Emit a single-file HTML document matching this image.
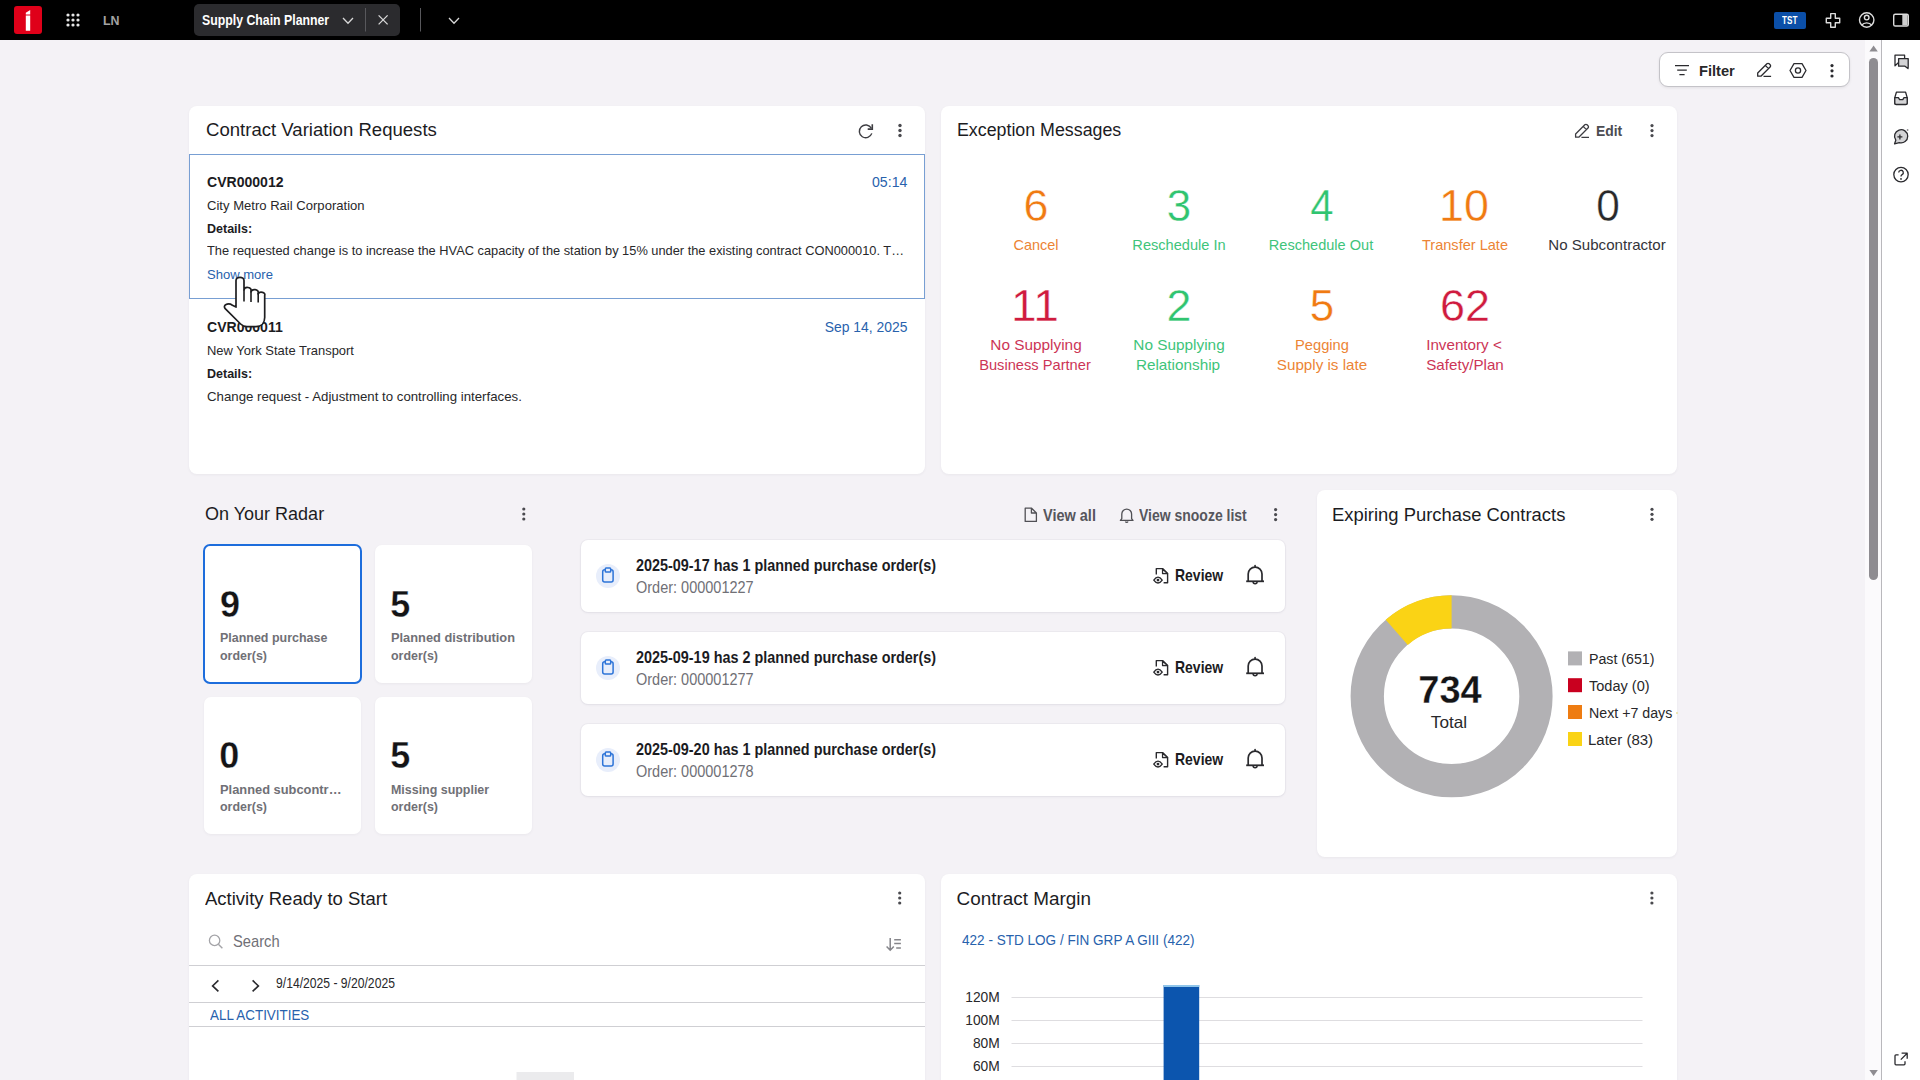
<!DOCTYPE html>
<html><head><meta charset="utf-8"><title>Supply Chain Planner</title>
<style>
html,body{margin:0;padding:0;}
body{width:1920px;height:1080px;overflow:hidden;position:relative;background:#f4f2f6;font-family:"Liberation Sans",sans-serif;}
.a{position:absolute;}
.t{position:absolute;white-space:nowrap;line-height:1;font-family:"Liberation Sans",sans-serif;}
.card{position:absolute;background:#fff;border-radius:8px;box-shadow:0 1px 3px rgba(40,30,60,0.05);}
.tile{position:absolute;background:#fff;border-radius:7px;box-shadow:0 1px 3px rgba(40,30,60,0.05);}
.ord{position:absolute;background:#fff;border-radius:7px;box-shadow:0 0 0 1px rgba(40,30,60,0.03),0 1px 3px rgba(40,30,60,0.06);}
svg{position:absolute;overflow:visible;}
</style></head><body>
<!-- top bar -->
<div class="a" style="left:0;top:0;width:1920px;height:40px;background:#000;"></div>
<div class="a" style="left:14px;top:6px;width:28px;height:28px;background:#df0019;border-radius:3px;"></div>
<svg style="left:14px;top:6px" width="28" height="28"><path d="M11.8 9.4h4.4v15.4h-4.4z M11.8 8.6v-1.9l4.4-2.7v4.6z" fill="#fff"/></svg>
<svg style="left:60px;top:8px" width="26" height="26" viewBox="60 8 26 26"><g fill="#e6e6e6"><circle cx="68" cy="15" r="1.6"/><circle cx="73" cy="15" r="1.6"/><circle cx="78" cy="15" r="1.6"/><circle cx="68" cy="20" r="1.6"/><circle cx="73" cy="20" r="1.6"/><circle cx="78" cy="20" r="1.6"/><circle cx="68" cy="25" r="1.6"/><circle cx="73" cy="25" r="1.6"/><circle cx="78" cy="25" r="1.6"/></g></svg>
<div class="a" style="left:194px;top:4px;width:206px;height:32px;background:#2b2b2e;border-radius:5px;"></div>
<svg style="left:0;top:0" width="1920" height="40"><g fill="none" stroke="#d8d8d8" stroke-width="1.3">
<path d="M343 18l5 5.2 5-5.2"/><path d="M378.6 15.4l9 9M387.6 15.4l-9 9"/><path d="M449 18l5 5.2 5-5.2"/>
</g><path d="M365.5 8v23.5M420.5 8v23.5" stroke="#58585c" stroke-width="1"/></svg>
<div class="a" style="left:1774px;top:12px;width:32px;height:17px;background:#0b4fa8;border-radius:2px;"></div>
<svg style="left:1820px;top:8px" width="100" height="26" viewBox="1820 8 100 26"><g fill="none" stroke="#dcdcdc" stroke-width="1.4" stroke-linejoin="round">
<path d="M1830.7 13.6h4.6v4.6h4.4v4.6h-4.4v4.5h-4.6v-4.5h-4.4v-4.6h4.4z"/>
<circle cx="1866.7" cy="20" r="7.2"/><circle cx="1866.7" cy="17.6" r="2.3"/><path d="M1861.6 25.2c1.4-1.7 3-2.3 5.1-2.3s3.7.6 5.1 2.3"/>
<rect x="1893.7" y="14.2" width="14.6" height="11.8" rx="1.6"/></g>
<rect x="1902.3" y="14.9" width="5.3" height="10.4" fill="#cfcfcf"/></svg>

<!-- right side strip -->
<div class="a" style="left:1865px;top:40px;width:16px;height:1040px;background:#fbfafc;"></div>
<div class="a" style="left:1881px;top:40px;width:1px;height:1040px;background:#b9b8bc;"></div>
<div class="a" style="left:1882px;top:40px;width:38px;height:1040px;background:#fff;"></div>
<div class="a" style="left:1869px;top:58px;width:9px;height:522px;background:#8e8c91;border-radius:4.5px;"></div>
<svg style="left:1860px;top:40px" width="60" height="1040" viewBox="1860 40 60 1040">
<path d="M1873.6 45.6l4.2 6h-8.4z" fill="#8e8c91"/><path d="M1873.6 1076l4.2-6h-8.4z" fill="#8e8c91"/>
<g fill="none" stroke="#2a2a2e" stroke-width="1.3" stroke-linejoin="round">
<path d="M1895 55.2h9.6v7.4h-6l-3.6 3.2z"/><path d="M1898.6 58.6h9.6v7.6l-0.2 2.4-3-2.4h-6.4z" fill="#d4d4d6"/>
<path d="M1894.8 97.6l1.6-5.4h9.2l1.6 5.4v5.6a1.4 1.4 0 0 1-1.4 1.4h-9.6a1.4 1.4 0 0 1-1.4-1.4z"/><path d="M1894.8 97.6h3.6l1.2 2h3.2l1.2-2h3.2v5.4a1.4 1.4 0 0 1-1.4 1.4h-9.6a1.4 1.4 0 0 1-1.4-1.4z" fill="#d4d4d6"/>
<path d="M1894.6 143.8l1.2-3.6a6.6 6.6 0 1 1 3.4 2.4z" fill="#d4d4d6"/><path d="M1899.9 134.4v5M1897.4 136.9h5"/>
<circle cx="1901" cy="174.6" r="7.2"/><path d="M1898.7 172.6a2.3 2.3 0 1 1 3.4 2c-.9.5-1.1 1-1.1 1.9"/>
<path d="M1901.6 1053.2h5.6v5.6M1907.2 1053.2l-6.4 6.4M1898.6 1054.8h-2.6a1 1 0 0 0-1 1v8a1 1 0 0 0 1 1h8a1 1 0 0 0 1-1v-2.6"/>
</g><circle cx="1901" cy="178.9" r="0.9" fill="#2a2a2e"/><circle cx="1907.6" cy="130" r="0.9" fill="#8e8c91"/></svg>

<!-- filter pill -->
<div class="a" style="left:1659px;top:52px;width:189px;height:33.4px;background:#fff;border:1px solid #c4c3c8;border-radius:9px;box-shadow:0 1px 3px rgba(0,0,0,0.08);"></div>
<svg style="left:1660px;top:52px" width="190" height="36" viewBox="1660 52 190 36"><g fill="none" stroke="#2a2a2e" stroke-width="1.3" stroke-linejoin="round">
<path d="M1675 65.6h14M1677.2 70.2h9.6M1679.4 74.6h5.2"/>
<path d="M1757.7 76.2v-3.2l9.2-9.2a1.6 1.6 0 0 1 2.3 0l.9.9a1.6 1.6 0 0 1 0 2.3l-9.2 9.2z M1765.3 65.4l3.2 3.2 M1763.5 76.3h7.6"/>
<path d="M1794 63.6h8l4 6.9-4 6.9h-8l-4-6.9z"/><circle cx="1798" cy="70.5" r="2.6"/></g>
<g fill="#2a2a2e"><circle cx="1832" cy="65.6" r="1.6"/><circle cx="1832" cy="70.8" r="1.6"/><circle cx="1832" cy="76" r="1.6"/></g></svg>

<!-- card 1: contract variation requests -->
<div class="card" style="left:189px;top:106px;width:736px;height:368px;"></div>
<div class="a" style="left:189px;top:154px;width:734px;height:143px;border:1px solid #789fd3;"></div>
<svg style="left:850px;top:115px" width="70" height="30" viewBox="850 115 70 30"><path d="M871.3 128.2a6.4 6.4 0 1 0 .5 5.2" fill="none" stroke="#3d3d42" stroke-width="1.4"/><path d="M872.3 124.2v4.9h-4.6" fill="none" stroke="#3d3d42" stroke-width="1.6" stroke-linejoin="miter"/>
<g fill="#4a4a4f"><circle cx="900" cy="125.5" r="1.7"/><circle cx="900" cy="130.5" r="1.7"/><circle cx="900" cy="135.5" r="1.7"/></g></svg>

<!-- card 2: exception messages -->
<div class="card" style="left:941px;top:106px;width:736px;height:368px;"></div>
<svg style="left:1570px;top:115px" width="100" height="30" viewBox="1570 115 100 30"><g fill="none" stroke="#3d3d42" stroke-width="1.3" stroke-linejoin="round">
<path d="M1575.6 137.2v-3.2l9.2-9.2a1.6 1.6 0 0 1 2.3 0l.9.9a1.6 1.6 0 0 1 0 2.3l-9.2 9.2z M1583.2 126.4l3.2 3.2 M1581.4 137.3h7.6"/></g>
<g fill="#4a4a4f"><circle cx="1652" cy="125.6" r="1.6"/><circle cx="1652" cy="130.6" r="1.6"/><circle cx="1652" cy="135.6" r="1.6"/></g></svg>

<!-- radar -->
<svg style="left:500px;top:500px" width="40" height="30" viewBox="500 500 40 30"><g fill="#4a4a4f"><circle cx="523.8" cy="509" r="1.6"/><circle cx="523.8" cy="514" r="1.6"/><circle cx="523.8" cy="519" r="1.6"/></g></svg>
<div class="tile" style="left:203px;top:544px;width:155px;height:136px;border:2px solid #1d6ddc;box-shadow:none;"></div>
<div class="tile" style="left:374.6px;top:545px;width:157.4px;height:138px;"></div>
<div class="tile" style="left:204px;top:697px;width:157.4px;height:137.4px;"></div>
<div class="tile" style="left:374.6px;top:697px;width:157.4px;height:137.4px;"></div>
<svg style="left:1015px;top:500px" width="280" height="30" viewBox="1015 500 280 30"><g fill="none" stroke="#505055" stroke-width="1.3" stroke-linejoin="round">
<path d="M1025.2 508.2h6.4l4.8 4.8v8.4h-11.2z M1031.4 508.2v4.8h5"/>
<path d="M1121.8 518.6v-4.6a4.9 4.9 0 0 1 9.8 0v4.6l1.4 1.8h-12.6z M1125.4 521.4a1.4 1.4 0 0 0 2.6 0"/></g>
<g fill="#4a4a4f"><circle cx="1275.6" cy="509.6" r="1.6"/><circle cx="1275.6" cy="514.6" r="1.6"/><circle cx="1275.6" cy="519.6" r="1.6"/></g></svg>
<!--ORDERS-->
<div class="ord" style="left:581px;top:540px;width:704px;height:72px;"></div>
<div class="ord" style="left:581px;top:632px;width:704px;height:72px;"></div>
<div class="ord" style="left:581px;top:724px;width:704px;height:72px;"></div>
<svg style="left:590px;top:550px" width="690" height="240" viewBox="590 550 690 240">
<defs><g id="clip"><circle cx="0.2" cy="0.5" r="12" fill="#e8eefb"/><rect x="-5.1" y="-5.6" width="10.4" height="12.2" rx="2" fill="none" stroke="#2d74d8" stroke-width="1.5"/><rect x="-2.5" y="-7.3" width="5.4" height="3.9" rx="0.8" fill="#e8eefb" stroke="#2d74d8" stroke-width="1.5"/></g>
<g id="rev"><path d="M2.8 6V0H9l5.1 5v9.1h-4" fill="none" stroke="#2a2a2e" stroke-width="1.4" stroke-linejoin="round"/><path d="M9 0v5h5.1z" fill="#2a2a2e" fill-opacity="0.15" stroke="#2a2a2e" stroke-width="1.2" stroke-linejoin="round"/><path d="M0.3 11.5Q4.5 5.6 8.7 11.5Q4.5 17.4 0.3 11.5z" fill="#fff" stroke="#2a2a2e" stroke-width="1.4" stroke-linejoin="round"/><circle cx="4.5" cy="11.5" r="1.4" fill="#2a2a2e"/></g>
<g id="bell"><path d="M2.4 15.9V8.6a6.9 6.9 0 0 1 13.8 0v7.3" fill="none" stroke="#2a2a2e" stroke-width="1.7"/><path d="M0.4 15.9h17.8" stroke="#2a2a2e" stroke-width="1.8"/><path d="M7.3 16.4a2 2 0 0 0 4 0" fill="none" stroke="#2a2a2e" stroke-width="1.5"/><path d="M9.3 0.2v1.6" stroke="#2a2a2e" stroke-width="1.6" stroke-linecap="round"/></g></defs>
<use href="#clip" x="607.8" y="575.4"/><use href="#clip" x="607.8" y="667.4"/><use href="#clip" x="607.8" y="759.4"/>
<use href="#rev" x="1153.5" y="568.6"/><use href="#rev" x="1153.5" y="660.6"/><use href="#rev" x="1153.5" y="752.6"/>
<use href="#bell" x="1245.8" y="565.4"/><use href="#bell" x="1245.8" y="657.4"/><use href="#bell" x="1245.8" y="749.4"/>
</svg>

<!-- expiring purchase contracts -->
<div class="card" style="left:1317px;top:490px;width:360px;height:367px;"></div>
<svg style="left:1317px;top:490px" width="360" height="370" viewBox="1317 490 360 370">
<g fill="#4a4a4f"><circle cx="1652" cy="509.3" r="1.6"/><circle cx="1652" cy="514.3" r="1.6"/><circle cx="1652" cy="519.3" r="1.6"/></g>
<circle cx="1451.6" cy="696.3" r="84.35" fill="none" stroke="#b2b1b4" stroke-width="33.3"/>
<path d="M1451.6 595.3A101 101 0 0 0 1385.7 619.8L1407.8 645A67.7 67.7 0 0 1 1451.6 628.6z" fill="#fad315"/>
<rect x="1568" y="651.4" width="14" height="14" fill="#b2b1b4"/><rect x="1568" y="678.2" width="14" height="14" fill="#c9001f"/><rect x="1568" y="705" width="14" height="14" fill="#ee7c12"/><rect x="1568" y="732" width="14" height="14" fill="#fad315"/>
<circle cx="1677" cy="713" r="1" fill="#e8e0a0"/>
</svg>

<!-- activity ready to start -->
<div class="card" style="left:189px;top:874px;width:736px;height:220px;"></div>
<svg style="left:189px;top:874px" width="736" height="206" viewBox="189 874 736 206">
<g fill="#4a4a4f"><circle cx="899.7" cy="893" r="1.6"/><circle cx="899.7" cy="898" r="1.6"/><circle cx="899.7" cy="903" r="1.6"/></g>
<circle cx="214.6" cy="940.4" r="5.2" fill="none" stroke="#a4a4a8" stroke-width="1.3"/><path d="M218.4 944.2l4 4" stroke="#a4a4a8" stroke-width="1.4"/>
<path d="M890.2 938v12M886.6 946.4l3.6 3.8 3.6-3.8M894.2 939.8h6.7M894.2 943.6h6.7M896.2 947.9h4.7" fill="none" stroke="#86868b" stroke-width="1.5"/>
<path d="M189 965.5h736M189 1002.5h736M189 1026.5h736" stroke="#cfcfd3" stroke-width="1"/>
<path d="M218.4 980.4l-5.8 5.5 5.8 5.5M252.6 980.4l5.8 5.5-5.8 5.5" fill="none" stroke="#2a2a2e" stroke-width="1.6"/>
<rect x="516.5" y="1072" width="57.5" height="10" fill="#ebebed"/>
</svg>

<!-- contract margin -->
<div class="card" style="left:941px;top:874px;width:736px;height:220px;"></div>
<svg style="left:941px;top:874px" width="736" height="206" viewBox="941 874 736 206">
<g fill="#4a4a4f"><circle cx="1651.9" cy="893" r="1.6"/><circle cx="1651.9" cy="898" r="1.6"/><circle cx="1651.9" cy="903" r="1.6"/></g>
<path d="M1011.5 997.5h631M1011.5 1020.5h631M1011.5 1043.5h631M1011.5 1066.5h631" stroke="#dedde0" stroke-width="1"/>
<rect x="1163.6" y="985" width="35.6" height="100" fill="#0c55ae"/><rect x="1163.6" y="985" width="35.6" height="2" fill="#8fc5ea"/>
</svg>

<div class="t" id="t0" style="top:13.76px;font-size:13.08px;color:#a3a3a3;font-weight:700;left:102.50px;transform:scaleX(0.9500);transform-origin:left top;">LN</div>
<div class="t" id="t1" style="top:13.16px;font-size:14.10px;color:#ffffff;font-weight:700;left:202.26px;transform:scaleX(0.8728);transform-origin:left top;">Supply Chain Planner</div>
<div class="t" id="t2" style="top:16.46px;font-size:10.17px;color:#ffffff;font-weight:700;left:1782.00px;transform:scaleX(0.8000);transform-origin:left top;">TST</div>
<div class="t" id="t3" style="top:63.79px;font-size:14.53px;color:#28282a;font-weight:700;left:1698.98px;transform:scaleX(1.0086);transform-origin:left top;">Filter</div>
<div class="t" id="t4" style="top:121.12px;font-size:18.90px;color:#1c1c1f;left:205.50px;transform:scaleX(0.9829);transform-origin:left top;">Contract Variation Requests</div>
<div class="t" id="t5" style="top:174.79px;font-size:14.53px;color:#1c1c1f;font-weight:700;left:206.50px;transform:scaleX(0.9679);transform-origin:left top;">CVR000012</div>
<div class="t" id="t6" style="top:198.52px;font-size:13.37px;color:#28282a;left:206.50px;transform:scaleX(0.9781);transform-origin:left top;">City Metro Rail Corporation</div>
<div class="t" id="t7" style="top:221.67px;font-size:13.37px;color:#1c1c1f;font-weight:700;left:206.50px;transform:scaleX(0.9362);transform-origin:left top;">Details:</div>
<div class="t" id="t8" style="top:244.47px;font-size:13.37px;color:#28282a;left:206.50px;transform:scaleX(0.9594);transform-origin:left top;">The requested change is to increase the HVAC capacity of the station by 15% under the existing contract CON000010. T…</div>
<div class="t" id="t9" style="top:267.52px;font-size:13.37px;color:#2862ad;left:206.50px;transform:scaleX(0.9761);transform-origin:left top;">Show more</div>
<div class="t" id="t10" style="top:174.69px;font-size:14.53px;color:#2862ad;right:1012.48px;transform:scaleX(0.9722);transform-origin:right top;">05:14</div>
<div class="t" id="t11" style="top:319.79px;font-size:14.53px;color:#1c1c1f;font-weight:700;left:206.50px;transform:scaleX(0.9679);transform-origin:left top;">CVR000011</div>
<div class="t" id="t12" style="top:344.07px;font-size:13.37px;color:#28282a;left:206.50px;transform:scaleX(0.9702);transform-origin:left top;">New York State Transport</div>
<div class="t" id="t13" style="top:367.07px;font-size:13.37px;color:#1c1c1f;font-weight:700;left:206.50px;transform:scaleX(0.9362);transform-origin:left top;">Details:</div>
<div class="t" id="t14" style="top:390.07px;font-size:13.37px;color:#28282a;left:206.50px;transform:scaleX(0.9905);transform-origin:left top;">Change request - Adjustment to controlling interfaces.</div>
<div class="t" id="t15" style="top:319.79px;font-size:14.53px;color:#2862ad;right:1012.26px;transform:scaleX(0.9570);transform-origin:right top;">Sep 14, 2025</div>
<div class="t" id="t16" style="top:120.92px;font-size:18.90px;color:#1c1c1f;left:956.82px;transform:scaleX(0.9422);transform-origin:left top;">Exception Messages</div>
<div class="t" id="t17" style="top:124.19px;font-size:14.53px;color:#4c4c52;font-weight:700;left:1595.52px;transform:scaleX(0.9556);transform-origin:left top;">Edit</div>
<div class="t" id="t18" style="top:183.64px;font-size:44.00px;color:#f07a12;-webkit-text-stroke:0.40px #fff;left:1036.00px;transform:translateX(-50%) scaleX(1.0200);transform-origin:center top;">6</div>
<div class="t" id="t19" style="top:237.04px;font-size:15.55px;color:#ec8435;left:1036.00px;transform:translateX(-50%) scaleX(0.9319);transform-origin:center top;">Cancel</div>
<div class="t" id="t20" style="top:183.64px;font-size:44.00px;color:#30c470;-webkit-text-stroke:0.40px #fff;left:1179.00px;transform:translateX(-50%) scaleX(1.0000);transform-origin:center top;">3</div>
<div class="t" id="t21" style="top:237.04px;font-size:15.55px;color:#3ec47a;left:1179.00px;transform:translateX(-50%) scaleX(0.9388);transform-origin:center top;">Reschedule In</div>
<div class="t" id="t22" style="top:183.64px;font-size:44.00px;color:#30c470;-webkit-text-stroke:0.40px #fff;left:1322.35px;transform:translateX(-50%) scaleX(0.9545);transform-origin:center top;">4</div>
<div class="t" id="t23" style="top:237.04px;font-size:15.55px;color:#3ec47a;left:1321.30px;transform:translateX(-50%) scaleX(0.9369);transform-origin:center top;">Reschedule Out</div>
<div class="t" id="t24" style="top:183.64px;font-size:44.00px;color:#f07a12;-webkit-text-stroke:0.40px #fff;left:1464.30px;transform:translateX(-50%) scaleX(1.0209);transform-origin:center top;">10</div>
<div class="t" id="t25" style="top:237.04px;font-size:15.55px;color:#ec8435;left:1465.00px;transform:translateX(-50%) scaleX(0.9363);transform-origin:center top;">Transfer Late</div>
<div class="t" id="t26" style="top:183.64px;font-size:44.00px;color:#28282a;-webkit-text-stroke:0.40px #fff;left:1608.00px;transform:translateX(-50%) scaleX(0.9636);transform-origin:center top;">0</div>
<div class="t" id="t27" style="top:237.04px;font-size:15.55px;color:#34343a;left:1607.30px;transform:translateX(-50%) scaleX(0.9702);transform-origin:center top;">No Subcontractor</div>
<div class="t" id="t28" style="top:283.54px;font-size:44.00px;color:#cf1b3e;-webkit-text-stroke:0.40px #fff;left:1035.30px;transform:translateX(-50%) scaleX(1.0475);transform-origin:center top;">11</div>
<div class="t" id="t29" style="top:336.64px;font-size:15.55px;color:#cc3556;left:1036.00px;transform:translateX(-50%) scaleX(0.9878);transform-origin:center top;">No Supplying</div>
<div class="t" id="t30" style="top:356.74px;font-size:15.55px;color:#cc3556;left:1035.30px;transform:translateX(-50%) scaleX(0.9427);transform-origin:center top;">Business Partner</div>
<div class="t" id="t31" style="top:283.54px;font-size:44.00px;color:#30c470;-webkit-text-stroke:0.40px #fff;left:1179.00px;transform:translateX(-50%) scaleX(1.0200);transform-origin:center top;">2</div>
<div class="t" id="t32" style="top:336.64px;font-size:15.55px;color:#3ec47a;left:1179.00px;transform:translateX(-50%) scaleX(0.9878);transform-origin:center top;">No Supplying</div>
<div class="t" id="t33" style="top:356.74px;font-size:15.55px;color:#3ec47a;left:1178.30px;transform:translateX(-50%) scaleX(0.9845);transform-origin:center top;">Relationship</div>
<div class="t" id="t34" style="top:283.54px;font-size:44.00px;color:#f07a12;-webkit-text-stroke:0.40px #fff;left:1322.00px;transform:translateX(-50%) scaleX(1.0000);transform-origin:center top;">5</div>
<div class="t" id="t35" style="top:336.64px;font-size:15.55px;color:#ec8435;left:1322.00px;transform:translateX(-50%) scaleX(0.9446);transform-origin:center top;">Pegging</div>
<div class="t" id="t36" style="top:356.74px;font-size:15.55px;color:#ec8435;left:1322.00px;transform:translateX(-50%) scaleX(0.9778);transform-origin:center top;">Supply is late</div>
<div class="t" id="t37" style="top:283.54px;font-size:44.00px;color:#cf1b3e;-webkit-text-stroke:0.40px #fff;left:1465.00px;transform:translateX(-50%) scaleX(1.0227);transform-origin:center top;">62</div>
<div class="t" id="t38" style="top:336.64px;font-size:15.55px;color:#cc3556;left:1464.30px;transform:translateX(-50%) scaleX(0.9776);transform-origin:center top;">Inventory &lt;</div>
<div class="t" id="t39" style="top:356.74px;font-size:15.55px;color:#cc3556;left:1465.00px;transform:translateX(-50%) scaleX(0.9744);transform-origin:center top;">Safety/Plan</div>
<div class="t" id="t40" style="top:504.92px;font-size:18.90px;color:#1c1c1f;left:205.02px;transform:scaleX(0.9532);transform-origin:left top;">On Your Radar</div>
<div class="t" id="t41" style="top:507.67px;font-size:15.99px;color:#56565c;font-weight:700;left:1043.26px;transform:scaleX(0.9069);transform-origin:left top;">View all</div>
<div class="t" id="t42" style="top:507.67px;font-size:15.99px;color:#56565c;font-weight:700;left:1139.26px;transform:scaleX(0.8748);transform-origin:left top;">View snooze list</div>
<div class="t" id="t43" style="top:586.56px;font-size:36.00px;color:#141416;font-weight:700;-webkit-text-stroke:0.30px #fff;left:220.02px;">9</div>
<div class="t" id="t44" style="top:631.01px;font-size:13.08px;color:#707076;font-weight:700;left:220.02px;transform:scaleX(0.9527);transform-origin:left top;">Planned purchase</div>
<div class="t" id="t45" style="top:648.61px;font-size:13.08px;color:#707076;font-weight:700;left:220.02px;transform:scaleX(0.9510);transform-origin:left top;">order(s)</div>
<div class="t" id="t46" style="top:586.56px;font-size:36.00px;color:#141416;font-weight:700;-webkit-text-stroke:0.30px #fff;left:390.30px;">5</div>
<div class="t" id="t47" style="top:631.01px;font-size:13.08px;color:#707076;font-weight:700;left:391.00px;transform:scaleX(0.9808);transform-origin:left top;">Planned distribution</div>
<div class="t" id="t48" style="top:648.61px;font-size:13.08px;color:#707076;font-weight:700;left:391.00px;transform:scaleX(0.9510);transform-origin:left top;">order(s)</div>
<div class="t" id="t49" style="top:738.36px;font-size:36.00px;color:#141416;font-weight:700;-webkit-text-stroke:0.30px #fff;left:219.32px;">0</div>
<div class="t" id="t50" style="top:782.81px;font-size:13.08px;color:#707076;font-weight:700;left:220.02px;transform:scaleX(0.9835);transform-origin:left top;">Planned subcontr…</div>
<div class="t" id="t51" style="top:800.41px;font-size:13.08px;color:#707076;font-weight:700;left:220.02px;transform:scaleX(0.9510);transform-origin:left top;">order(s)</div>
<div class="t" id="t52" style="top:738.36px;font-size:36.00px;color:#141416;font-weight:700;-webkit-text-stroke:0.30px #fff;left:390.30px;">5</div>
<div class="t" id="t53" style="top:782.81px;font-size:13.08px;color:#707076;font-weight:700;left:391.00px;transform:scaleX(0.9510);transform-origin:left top;">Missing supplier</div>
<div class="t" id="t54" style="top:800.41px;font-size:13.08px;color:#707076;font-weight:700;left:391.00px;transform:scaleX(0.9510);transform-origin:left top;">order(s)</div>
<div class="t" id="t55" style="top:557.87px;font-size:15.99px;color:#1c1c1f;font-weight:700;left:635.50px;transform:scaleX(0.9006);transform-origin:left top;">2025-09-17 has 1 planned purchase order(s)</div>
<div class="t" id="t56" style="top:579.87px;font-size:15.99px;color:#707076;left:635.50px;transform:scaleX(0.9070);transform-origin:left top;">Order: 000001227</div>
<div class="t" id="t57" style="top:567.87px;font-size:15.99px;color:#1c1c1f;font-weight:700;left:1174.74px;transform:scaleX(0.8745);transform-origin:left top;">Review</div>
<div class="t" id="t58" style="top:649.87px;font-size:15.99px;color:#1c1c1f;font-weight:700;left:635.50px;transform:scaleX(0.9006);transform-origin:left top;">2025-09-19 has 2 planned purchase order(s)</div>
<div class="t" id="t59" style="top:671.87px;font-size:15.99px;color:#707076;left:635.50px;transform:scaleX(0.9070);transform-origin:left top;">Order: 000001277</div>
<div class="t" id="t60" style="top:659.87px;font-size:15.99px;color:#1c1c1f;font-weight:700;left:1174.74px;transform:scaleX(0.8745);transform-origin:left top;">Review</div>
<div class="t" id="t61" style="top:741.87px;font-size:15.99px;color:#1c1c1f;font-weight:700;left:635.50px;transform:scaleX(0.9006);transform-origin:left top;">2025-09-20 has 1 planned purchase order(s)</div>
<div class="t" id="t62" style="top:763.87px;font-size:15.99px;color:#707076;left:635.50px;transform:scaleX(0.9070);transform-origin:left top;">Order: 000001278</div>
<div class="t" id="t63" style="top:751.87px;font-size:15.99px;color:#1c1c1f;font-weight:700;left:1174.74px;transform:scaleX(0.8745);transform-origin:left top;">Review</div>
<div class="t" id="t64" style="top:505.62px;font-size:18.90px;color:#1c1c1f;left:1332.08px;transform:scaleX(0.9748);transform-origin:left top;">Expiring Purchase Contracts</div>
<div class="t" id="t65" style="top:670.68px;font-size:38.60px;color:#141416;font-weight:700;-webkit-text-stroke:0.30px #fff;left:1449.54px;transform:translateX(-50%) scaleX(0.9873);transform-origin:center top;">734</div>
<div class="t" id="t66" style="top:714.86px;font-size:16.72px;color:#28282a;left:1448.98px;transform:translateX(-50%) scaleX(1.0286);transform-origin:center top;">Total</div>
<div class="t" id="t67" style="top:651.18px;font-size:15.26px;color:#28282a;left:1588.52px;transform:scaleX(0.9304);transform-origin:left top;">Past (651)</div>
<div class="t" id="t68" style="top:678.18px;font-size:15.26px;color:#28282a;left:1588.52px;transform:scaleX(0.9524);transform-origin:left top;">Today (0)</div>
<div class="t" id="t69" style="top:705.18px;font-size:15.26px;color:#28282a;left:1588.52px;transform:scaleX(0.9315);transform-origin:left top;">Next +7 days</div>
<div class="t" id="t70" style="top:732.18px;font-size:15.26px;color:#28282a;left:1587.82px;transform:scaleX(0.9844);transform-origin:left top;">Later (83)</div>
<div class="t" id="t71" style="top:889.62px;font-size:18.90px;color:#1c1c1f;left:204.50px;transform:scaleX(0.9796);transform-origin:left top;">Activity Ready to Start</div>
<div class="t" id="t72" style="top:934.47px;font-size:15.99px;color:#707076;left:232.98px;transform:scaleX(0.9204);transform-origin:left top;">Search</div>
<div class="t" id="t73" style="top:977.10px;font-size:13.81px;color:#28282a;left:276.48px;transform:scaleX(0.8806);transform-origin:left top;">9/14/2025 - 9/20/2025</div>
<div class="t" id="t74" style="top:1007.48px;font-size:15.26px;color:#2862ad;left:209.98px;transform:scaleX(0.8788);transform-origin:left top;">ALL ACTIVITIES</div>
<div class="t" id="t75" style="top:889.52px;font-size:18.90px;color:#1c1c1f;left:956.52px;">Contract Margin</div>
<div class="t" id="t76" style="top:932.28px;font-size:15.26px;color:#2862ad;left:962.00px;transform:scaleX(0.8889);transform-origin:left top;">422 - STD LOG / FIN GRP A GIII (422)</div>
<div class="t" id="t77" style="top:991.00px;font-size:13.81px;color:#28282a;right:920.26px;">120M</div>
<div class="t" id="t78" style="top:1014.10px;font-size:13.81px;color:#28282a;right:920.26px;">100M</div>
<div class="t" id="t79" style="top:1037.20px;font-size:13.81px;color:#28282a;right:920.26px;">80M</div>
<div class="t" id="t80" style="top:1060.30px;font-size:13.81px;color:#28282a;right:920.26px;">60M</div>

<!-- cursor -->
<svg style="left:215px;top:270px" width="60" height="65" viewBox="215 270 60 65"><path d="M236 307V280.6A4 3.3 0 0 1 244 280.6V289.8A3.5 2.6 0 0 1 251 290.4V291.8A3.6 2.6 0 0 1 258.2 292.6V294A3.3 2.4 0 0 1 264.7 295.4V317.5C264.7 322.8 261.5 326.6 256 326.6H247C244 326.6 242.2 325.6 240.6 324L225.2 308.6C224 307.4 224.2 305.6 225.6 304.8C227.6 303.6 230.4 303.8 232.4 305.2Z" fill="#fff" stroke="#1e1e20" stroke-width="1.7" stroke-linejoin="round"/><path d="M244 289.8V301.4M251 291.4V302M258.2 293V302.4" stroke="#1e1e20" stroke-width="1.6"/></svg>
</body></html>
